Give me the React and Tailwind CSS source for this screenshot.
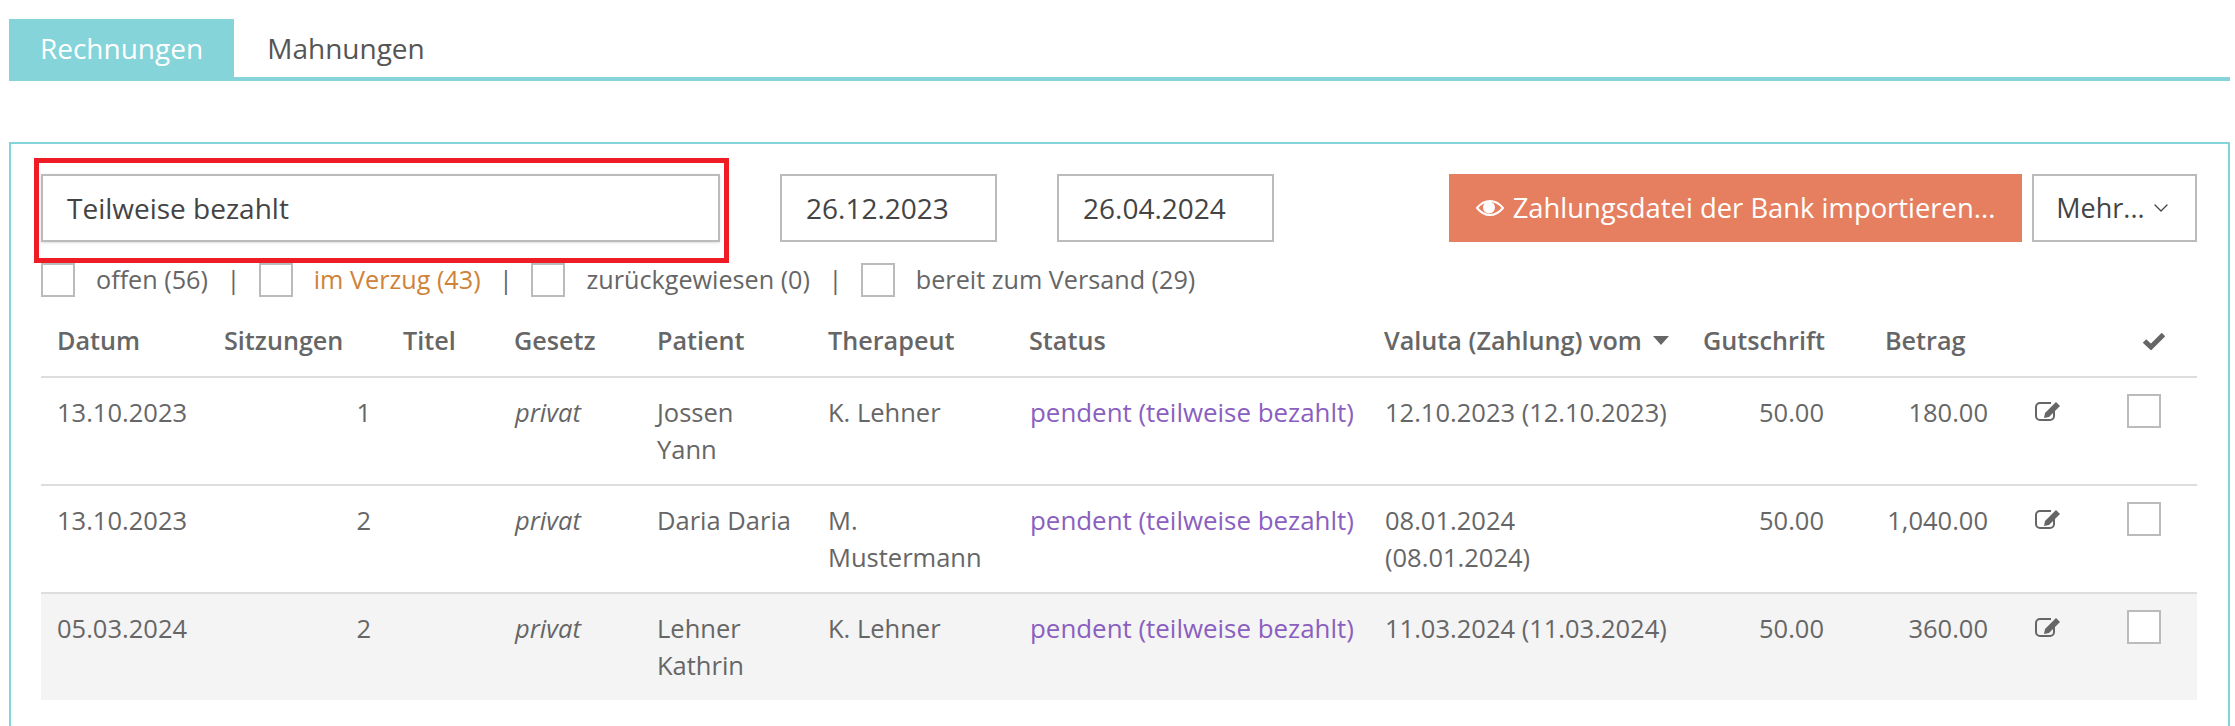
import { ChevronDown } from 'lucide-react';

const rows = [
  { datum: '13.10.2023', n: 1, patient: 'Jossen\nYann', therapeut: 'K. Lehner', valuta: '12.10.2023 (12.10.2023)', betrag: '180.00' },
  { datum: '13.10.2023', n: 2, patient: 'Daria Daria', therapeut: 'M.\nMustermann', valuta: '08.01.2024\n(08.01.2024)', betrag: '1,040.00' },
  { datum: '05.03.2024', n: 2, patient: 'Lehner\nKathrin', therapeut: 'K. Lehner', valuta: '11.03.2024 (11.03.2024)', betrag: '360.00', shaded: true },
];

function Box() {
  return <span className="block w-[34px] h-[34px] border-2 border-[#bbbbbb] bg-white" />;
}

function Filter({ label, className }) {
  return (
    <div className="flex items-center">
      <Box />
      <span className={`ml-[21px] ${className || ''}`}>{label}</span>
    </div>
  );
}

function Sep() {
  return <span className="mx-[18.5px] text-[#666666]">|</span>;
}

function EyeIcon() {
  return (
    <svg width="28" height="16" viewBox="0 0 28 16">
      <path d="M1 8 C6 2,10 1,14 1 S22 2,27 8 C22 14,18 15,14 15 S6 14,1 8Z" fill="none" stroke="currentColor" strokeWidth="2" />
      <circle cx="13" cy="7.5" r="6" fill="currentColor" />
    </svg>
  );
}

function CheckIcon() {
  return (
    <svg width="22" height="18" viewBox="0 0 22 18">
      <path d="M1.5 9 L8 15 L20.5 2.5" fill="none" stroke="currentColor" strokeWidth="5" />
    </svg>
  );
}

function EditIcon() {
  return (
    <svg width="26" height="20" viewBox="0 0 26 20">
      <path d="M16 2 H5 a4 4 0 0 0 -4 4 V15 a4 4 0 0 0 4 4 H15 a4 4 0 0 0 4 -4 V10" fill="none" stroke="currentColor" strokeWidth="2" />
      <path d="M9 17 L10 12 L21 1 L25 5 L14 16 Z" fill="currentColor" />
    </svg>
  );
}

function App() {
  return (
    <div className="h-[726px] overflow-hidden bg-white text-[#666666] text-[25.5px] font-['Open_Sans',sans-serif]">
      {/* Tabs */}
      <div className="pt-[19px] pl-[9px] pr-[5px]">
        <div className="flex border-b-4 border-[#84d4da] h-[62px]">
          <div className="w-[225px] flex items-center justify-center bg-[#84d4da] text-white text-[28px]">Rechnungen</div>
          <div className="w-[224px] flex items-center justify-center text-[#555555] text-[28px]">Mahnungen</div>
        </div>
      </div>

      <div className="mt-[61px] mr-[5px] ml-[9px] h-[600px] border-2 border-[#84d4da] pl-[30px] pr-[31px] pt-[30px]">
        {/* Filter bar */}
        <div className="flex items-start">
          <div className="relative w-[679px] h-[68px]">
            <div className="h-full border-2 border-[#bbbbbb] shadow-sm flex items-center pl-[24px] text-[28px] text-[#444444]">Teilweise bezahlt</div>
            <div className="absolute -left-[7px] -top-[16px] -right-[9px] -bottom-[21px] border-[5px] border-[#ee1c25]" />
          </div>
          <div className="ml-[60px] w-[217px] h-[68px] border-2 border-[#bbbbbb] flex items-center pl-[24px] text-[28px] text-[#444444]">26.12.2023</div>
          <div className="ml-[60px] w-[217px] h-[68px] border-2 border-[#bbbbbb] flex items-center pl-[24px] text-[28px] text-[#444444]">26.04.2024</div>
          <div className="ml-auto h-[68px] w-[573px] bg-[#e57f60] text-white text-[27.4px] flex items-center justify-center gap-[9px] whitespace-nowrap">
            <EyeIcon />
            Zahlungsdatei der Bank importieren...
          </div>
          <div className="ml-[10px] w-[165px] h-[68px] border-2 border-[#bbbbbb] flex items-center justify-center gap-[4px] text-[27px] text-[#444444]">
            Mehr...
            <ChevronDown className="w-[24px] h-[24px]" strokeWidth={1.3} />
          </div>
        </div>

        {/* Status filters */}
        <div className="flex items-center mt-[21px] h-[34px] text-[25.2px]">
          <Filter label="offen (56)" />
          <Sep />
          <Filter label="im Verzug (43)" className="text-[#d08238]" />
          <Sep />
          <Filter label="zurückgewiesen (0)" />
          <Sep />
          <Filter label="bereit zum Versand (29)" />
        </div>

        {/* Table */}
        <table className="mt-[17px] w-[2156px] table-fixed border-collapse">
          <colgroup>
            <col className="w-[167px]" />
            <col className="w-[179px]" />
            <col className="w-[111px]" />
            <col className="w-[143px]" />
            <col className="w-[171px]" />
            <col className="w-[201px]" />
            <col className="w-[355px]" />
            <col className="w-[319px]" />
            <col className="w-[152px]" />
            <col className="w-[164px]" />
            <col className="w-[108px]" />
            <col className="w-[86px]" />
          </colgroup>
          <thead>
            <tr className="border-b-2 border-[#dddddd] h-[63px] text-left text-[25.2px]">
              <th className="px-[16px] pb-[9px] font-semibold">Datum</th>
              <th className="px-[16px] pb-[9px] font-semibold">Sitzungen</th>
              <th className="px-[16px] pb-[9px] font-semibold">Titel</th>
              <th className="px-[16px] pb-[9px] font-semibold">Gesetz</th>
              <th className="px-[16px] pb-[9px] font-semibold">Patient</th>
              <th className="px-[16px] pb-[9px] font-semibold">Therapeut</th>
              <th className="px-[16px] pb-[9px] font-semibold">Status</th>
              <th className="px-[16px] pb-[9px] font-semibold whitespace-nowrap">
                <span className="inline-flex items-center gap-[11px]">
                  Valuta (Zahlung) vom
                  <svg width="16" height="9" viewBox="0 0 16 9"><path d="M0 0 H16 L8 9 Z" fill="currentColor" /></svg>
                </span>
              </th>
              <th className="px-[16px] pb-[9px] font-semibold">Gutschrift</th>
              <th className="pl-[46px] pb-[9px] font-semibold">Betrag</th>
              <th />
              <th className="pl-[32px] pb-[9px]"><CheckIcon /></th>
            </tr>
          </thead>
          <tbody>
            {rows.map((r, i) => (
              <tr key={i} className={`border-b-2 border-[#dddddd] last:border-b-0 align-top leading-[37px] ${r.shaded ? 'bg-[#f4f4f4]' : ''}`}>
                <td className="px-[16px] py-[16px]">{r.datum}</td>
                <td className="px-[16px] py-[16px] text-right">{r.n}</td>
                <td className="px-[16px] py-[16px]" />
                <td className="pl-[17px] pr-[16px] py-[16px] italic">privat</td>
                <td className="px-[16px] py-[16px] whitespace-pre-line">{r.patient}</td>
                <td className="px-[16px] py-[16px] whitespace-pre-line">{r.therapeut}</td>
                <td className="pl-[17px] pr-[16px] py-[16px] text-[25.9px] text-[#8a5fc0] whitespace-nowrap">pendent (teilweise bezahlt)</td>
                <td className="pl-[17px] pr-[16px] py-[16px] whitespace-pre-line">{r.valuta}</td>
                <td className="pl-[16px] pr-[15px] py-[16px] text-right">50.00</td>
                <td className="pl-[16px] pr-[15px] py-[16px] text-right">{r.betrag}</td>
                <td className="pl-[32px] py-[16px]"><div className="mt-[7px]"><EditIcon /></div></td>
                <td className="pl-[16px] py-[16px]"><Box /></td>
              </tr>
            ))}
          </tbody>
        </table>
      </div>
    </div>
  );
}

export default App;
